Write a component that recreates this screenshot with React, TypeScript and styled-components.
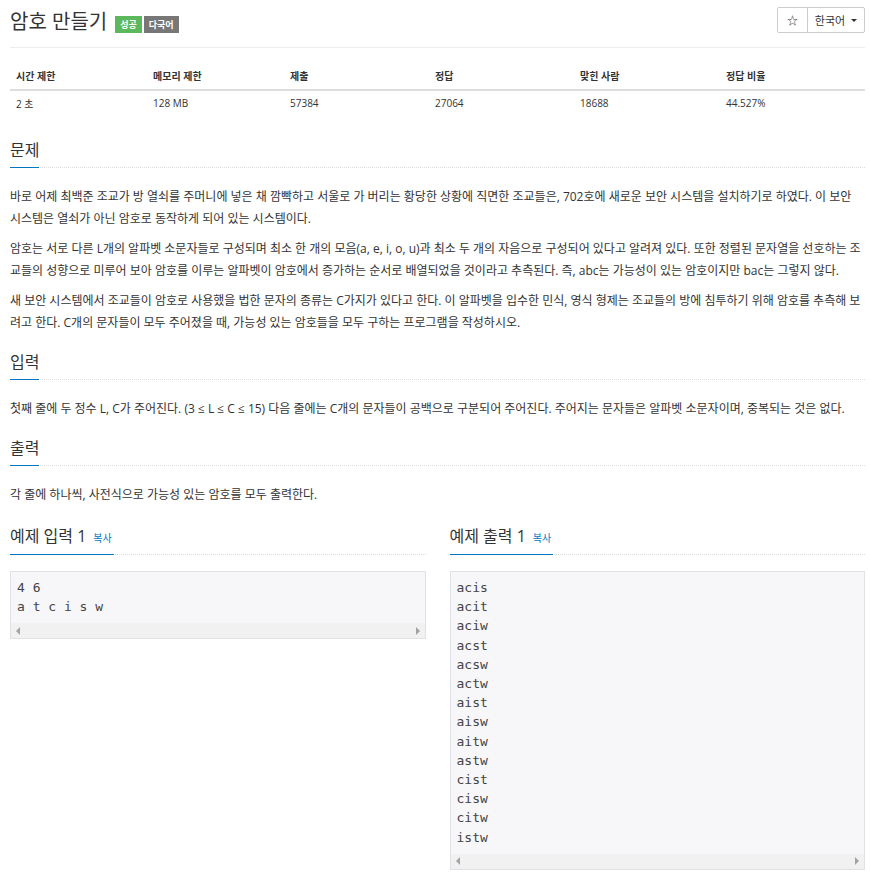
import React from 'react';
import styled, { createGlobalStyle } from 'styled-components';

const GlobalStyle = createGlobalStyle`
  body {
    margin: 0;
    background: #fff;
    color: #333;
    font-family: "Open Sans", "Noto Sans CJK KR", sans-serif;
  }
`;

const Page = styled.div`
  padding: 0 5px 0 10px;
`;

const TitleRow = styled.div`
  display: flex;
  align-items: flex-start;
  justify-content: space-between;
  height: 40px;
  padding-top: 7px;
  border-bottom: 1px solid #eee;
  margin-bottom: 14px;
`;

const Title = styled.h1`
  display: flex;
  align-items: center;
  gap: 8px;
  height: 28px;
  margin: 1px 0 0;
  font-size: 20px;
  font-weight: 400;
  line-height: 28px;
  color: #333;
`;

const Badges = styled.span`
  display: flex;
  gap: 2px;
  margin-top: 5px;
`;

const Badge = styled.span<{ $bg: string }>`
  display: inline-flex;
  align-items: center;
  height: 17px;
  padding: 0 5px;
  background: ${(p) => p.$bg};
  color: #fff;
  font-size: 9px;
  font-weight: 700;
  line-height: 1;
`;

const BtnGroup = styled.div`
  display: flex;
  height: 26px;
  border: 1px solid #ccc;
  border-radius: 2px;
  box-sizing: border-box;
`;

const Btn = styled.div<{ $w: number }>`
  width: ${(p) => p.$w}px;
  display: flex;
  align-items: center;
  justify-content: center;
  gap: 6px;
  font-size: 11px;
  color: #333;
  & + & {
    border-left: 1px solid #ccc;
  }
`;

const Caret = styled.span`
  width: 0;
  height: 0;
  border-left: 3px solid transparent;
  border-right: 3px solid transparent;
  border-top: 3px solid #333;
`;

const Table = styled.div`
  display: grid;
  grid-template-columns: 137px 137px 145px 145px 146px 145px;
  font-size: 10px;
`;

const Th = styled.div`
  height: 27px;
  display: flex;
  align-items: center;
  padding-left: 6px;
  font-weight: 700;
  border-bottom: 2px solid #ddd;
`;

const Td = styled.div`
  height: 24px;
  display: flex;
  align-items: center;
  padding-left: 6px;
`;

const Section = styled.section<{ $top?: number }>`
  margin-top: ${(p) => p.$top ?? 18}px;
`;

const Headline = styled.div`
  display: flex;
  border-bottom: 1px dotted #ddd;
  margin-bottom: 18px;
`;

const H2 = styled.h2<{ $pad?: number }>`
  margin: 0 0 -1px;
  padding-bottom: ${(p) => p.$pad ?? 7}px;
  border-bottom: 1px solid #0076c0;
  font-size: 16px;
  font-weight: 400;
  line-height: 20px;
  color: #333;
`;

const CopyLink = styled.span`
  font-size: 10px;
  color: #0076c0;
  margin-left: 7px;
  padding-right: 2px;
`;

const Text = styled.p`
  margin: 0 0 8px;
  font-size: 12px;
  line-height: 22px;
  color: #333;
`;

const Samples = styled.div`
  display: grid;
  grid-template-columns: 1fr 1fr;
  column-gap: 24px;
  align-items: start;
  margin-top: 20px;
`;

const SampleCol = styled.div`
  & ${Headline} {
    margin-bottom: 16px;
  }
`;

const CodeBox = styled.div`
  background: #f7f7f9;
  border: 1px solid #e1e1e8;
`;

const Pre = styled.pre`
  margin: 0;
  padding: 6px 6px 7px;
  font-family: "DejaVu Sans Mono", "Liberation Mono", monospace;
  font-size: 13px;
  line-height: 19.2px;
  color: #444;
`;

const ScrollBar = styled.div`
  height: 15px;
  background: #f1f1f1;
  display: flex;
  align-items: center;
  justify-content: space-between;
  padding: 0 5px;
`;

const Arrow = styled.span<{ $dir: 'left' | 'right' }>`
  width: 0;
  height: 0;
  border-top: 4px solid transparent;
  border-bottom: 4px solid transparent;
  ${(p) =>
    p.$dir === 'left'
      ? 'border-right: 4px solid #a3a3a3;'
      : 'border-left: 4px solid #a3a3a3;'}
`;

const heads = ['시간 제한', '메모리 제한', '제출', '정답', '맞힌 사람', '정답 비율'];
const values = ['2 초', '128 MB', '57384', '27064', '18688', '44.527%'];

const sampleOut = [
  'acis', 'acit', 'aciw', 'acst', 'acsw', 'actw', 'aist',
  'aisw', 'aitw', 'astw', 'cist', 'cisw', 'citw', 'istw',
];

const Code = ({ lines }: { lines: string[] }) => (
  <CodeBox>
    <Pre>{lines.join('\n')}</Pre>
    <ScrollBar>
      <Arrow $dir="left" />
      <Arrow $dir="right" />
    </ScrollBar>
  </CodeBox>
);

export default function App() {
  return (
    <>
      <GlobalStyle />
      <Page>
        <TitleRow>
          <Title>
            암호 만들기
            <Badges>
              <Badge $bg="#5cb85c">성공</Badge>
              <Badge $bg="#777">다국어</Badge>
            </Badges>
          </Title>
          <BtnGroup>
            <Btn $w={29}>☆</Btn>
            <Btn $w={56}>
              한국어 <Caret />
            </Btn>
          </BtnGroup>
        </TitleRow>

        <Table>
          {heads.map((h) => (
            <Th key={h}>{h}</Th>
          ))}
          {values.map((v) => (
            <Td key={v}>{v}</Td>
          ))}
        </Table>

        <Section $top={25}>
          <Headline>
            <H2>문제</H2>
          </Headline>
          <Text>
            바로 어제 최백준 조교가 방 열쇠를 주머니에 넣은 채 깜빡하고 서울로 가 버리는 황당한 상황에 직면한 조교들은, 702호에 새로운 보안 시스템을 설치하기로 하였다. 이 보안 시스템은 열쇠가 아닌 암호로 동작하게 되어 있는 시스템이다.
          </Text>
          <Text>
            암호는 서로 다른 L개의 알파벳 소문자들로 구성되며 최소 한 개의 모음(a, e, i, o, u)과 최소 두 개의 자음으로 구성되어 있다고 알려져 있다. 또한 정렬된 문자열을 선호하는 조교들의 성향으로 미루어 보아 암호를 이루는 알파벳이 암호에서 증가하는 순서로 배열되었을 것이라고 추측된다. 즉, abc는 가능성이 있는 암호이지만 bac는 그렇지 않다.
          </Text>
          <Text>
            새 보안 시스템에서 조교들이 암호로 사용했을 법한 문자의 종류는 C가지가 있다고 한다. 이 알파벳을 입수한 민식, 영식 형제는 조교들의 방에 침투하기 위해 암호를 추측해 보려고 한다. C개의 문자들이 모두 주어졌을 때, 가능성 있는 암호들을 모두 구하는 프로그램을 작성하시오.
          </Text>
        </Section>

        <Section>
          <Headline>
            <H2>입력</H2>
          </Headline>
          <Text>
            첫째 줄에 두 정수 L, C가 주어진다. (3 ≤ L ≤ C ≤ 15) 다음 줄에는 C개의 문자들이 공백으로 구분되어 주어진다. 주어지는 문자들은 알파벳 소문자이며, 중복되는 것은 없다.
          </Text>
        </Section>

        <Section>
          <Headline>
            <H2>출력</H2>
          </Headline>
          <Text>각 줄에 하나씩, 사전식으로 가능성 있는 암호를 모두 출력한다.</Text>
        </Section>

        <Samples>
          <SampleCol>
            <Headline>
              <H2 $pad={6}>
                예제 입력 1<CopyLink>복사</CopyLink>
              </H2>
            </Headline>
            <Code lines={['4 6', 'a t c i s w']} />
          </SampleCol>
          <SampleCol>
            <Headline>
              <H2 $pad={6}>
                예제 출력 1<CopyLink>복사</CopyLink>
              </H2>
            </Headline>
            <Code lines={sampleOut} />
          </SampleCol>
        </Samples>
      </Page>
    </>
  );
}
